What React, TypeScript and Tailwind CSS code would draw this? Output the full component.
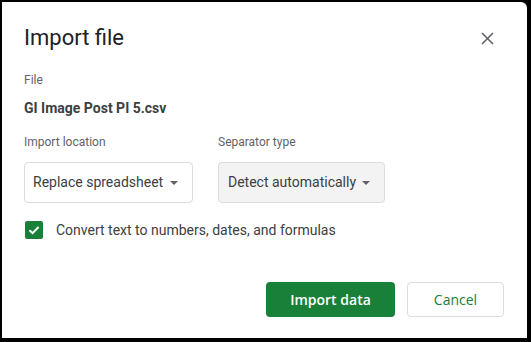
import React from "react";

function Caret() {
  return (
    <svg width="8" height="4" viewBox="0 0 8 4" className="shrink-0">
      <path d="M0 0 L8 0 L4 4 Z" fill="#5f6368" />
    </svg>
  );
}

export default function App() {
  return (
    <div className="w-[531px] h-[342px] bg-black pl-[2px] pt-[2px] pr-[4px] pb-[4px]" style={{ fontFamily: "Roboto, 'Noto Sans', sans-serif" }}>
      <div className="w-full h-full bg-white rounded-tr-[6px] flex flex-col pl-[22px] pr-[23px]">
        <div className="flex items-center justify-between mt-[22px] h-[28px]">
          <div className="text-[22px] leading-[28px] text-[#202124]">Import file</div>
          <svg width="13" height="13" viewBox="0 0 13 13" className="mr-[10px]">
            <path d="M1 1 L12 12 M12 1 L1 12" stroke="#5f6368" strokeWidth="1.6" />
          </svg>
        </div>
        <div className="mt-[20px] text-[12px] leading-[16px] text-[#5f6368]">File</div>
        <div className="mt-[11px] text-[14px] leading-[18px] font-bold text-[#3c4043]">GI Image Post PI 5.csv</div>
        <div className="mt-[17px] flex gap-[25px]">
          <div className="flex flex-col">
            <div className="text-[12px] leading-[16px] text-[#5f6368]">Import location</div>
            <div className="mt-[12px] w-[169px] h-[41px] border border-[#dadce0] rounded-[4px] bg-white flex items-center pl-[8px] pr-[14px] justify-between">
              <span className="text-[14px] text-[#3c4043]">Replace spreadsheet</span>
              <Caret />
            </div>
          </div>
          <div className="flex flex-col">
            <div className="text-[12px] leading-[16px] text-[#5f6368]">Separator type</div>
            <div className="mt-[12px] w-[167px] h-[41px] border border-[#dadce0] rounded-[4px] bg-[#f3f3f3] flex items-center pl-[9px] pr-[14px] justify-between">
              <span className="text-[14px] text-[#3c4043]">Detect automatically</span>
              <Caret />
            </div>
          </div>
        </div>
        <div className="mt-[17px] h-[20px] flex items-center">
          <div className="w-[18px] h-[18px] ml-[1px] rounded-[2px] bg-[#188038] flex items-center justify-center">
            <svg width="14" height="14" viewBox="0 0 14 14">
              <path d="M2.5 7.2 L5.6 10.2 L11.5 4" stroke="white" strokeWidth="2" fill="none" />
            </svg>
          </div>
          <span className="ml-[13px] text-[14px] text-[#3c4043]">Convert text to numbers, dates, and formulas</span>
        </div>
        <div className="mt-[42px] flex justify-end gap-[12px]">
          <div className="w-[129px] h-[35px] rounded-[4px] bg-[#188038] flex items-center justify-center text-white text-[14px]" style={{ fontFamily: "'Open Sans', Roboto, sans-serif", fontWeight: 600 }}>Import data</div>
          <div className="w-[97px] h-[35px] rounded-[4px] border border-[#dadce0] bg-white flex items-center justify-center text-[#188038] text-[14px]" style={{ fontFamily: "'Open Sans', Roboto, sans-serif", fontWeight: 500 }}>Cancel</div>
        </div>
      </div>
    </div>
  );
}
